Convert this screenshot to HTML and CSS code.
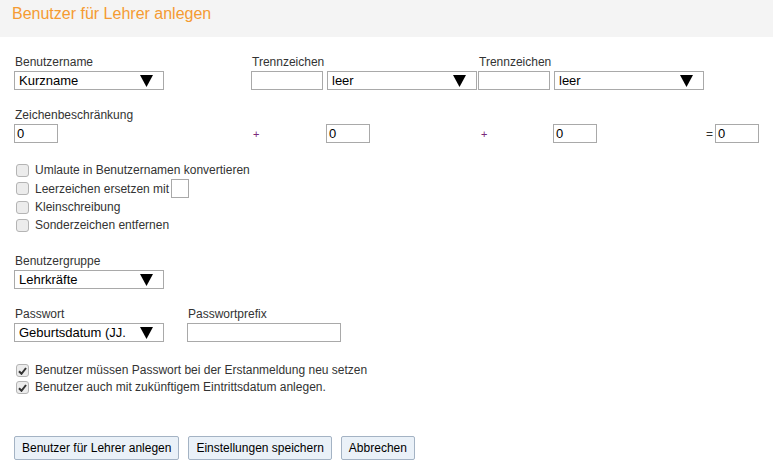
FILE: index.html
```html
<!DOCTYPE html>
<html lang="de">
<head>
    <meta charset="UTF-8">
    <title>Benutzer für Lehrer anlegen</title>
    <link rel="stylesheet" href="styles.css">
</head>
<body>
    <header class="page-head">
        <h1>Benutzer für Lehrer anlegen</h1>
    </header>

    <form class="form">
        <div class="row">
            <div class="field field-name">
                <label>Benutzername</label>
                <div class="select w150"><span>Kurzname</span><svg class="arrow" width="13" height="12" viewBox="0 0 13 12"><path d="M0 0 H13 L6.5 12 Z" fill="#000"/></svg></div>
            </div>
            <div class="field field-sep">
                <label>Trennzeichen</label>
                <div class="pair">
                    <div class="input w72"></div>
                    <div class="select w150"><span>leer</span><svg class="arrow" width="13" height="12" viewBox="0 0 13 12"><path d="M0 0 H13 L6.5 12 Z" fill="#000"/></svg></div>
                </div>
            </div>
            <div class="field">
                <label>Trennzeichen</label>
                <div class="pair">
                    <div class="input w72"></div>
                    <div class="select w150"><span>leer</span><svg class="arrow" width="13" height="12" viewBox="0 0 13 12"><path d="M0 0 H13 L6.5 12 Z" fill="#000"/></svg></div>
                </div>
            </div>
        </div>

        <div class="block">
            <label>Zeichenbeschränkung</label>
            <div class="limits">
                <div class="cell c1"><div class="input w44">0</div></div>
                <div class="cell c2"><span class="op">+</span></div>
                <div class="cell c3"><div class="input w44">0</div></div>
                <div class="cell c4"><span class="op">+</span></div>
                <div class="cell c5"><div class="input w44">0</div></div>
                <div class="cell c6"><span class="eq">=</span></div>
                <div class="cell"><div class="input w44">0</div></div>
            </div>
        </div>

        <ul class="checks">
            <li><span class="box"></span>Umlaute in Benutzernamen konvertieren</li>
            <li><span class="box"></span>Leerzeichen ersetzen mit <span class="input small"></span></li>
            <li><span class="box"></span>Kleinschreibung</li>
            <li><span class="box"></span>Sonderzeichen entfernen</li>
        </ul>

        <div class="block group">
            <label>Benutzergruppe</label>
            <div class="select w150"><span>Lehrkräfte</span><svg class="arrow" width="13" height="12" viewBox="0 0 13 12"><path d="M0 0 H13 L6.5 12 Z" fill="#000"/></svg></div>
        </div>

        <div class="row pw">
            <div class="field field-pw">
                <label>Passwort</label>
                <div class="select w150"><span>Geburtsdatum (JJ.</span><svg class="arrow" width="13" height="12" viewBox="0 0 13 12"><path d="M0 0 H13 L6.5 12 Z" fill="#000"/></svg></div>
            </div>
            <div class="field">
                <label>Passwortprefix</label>
                <div class="input w154"></div>
            </div>
        </div>

        <ul class="checks checked">
            <li><span class="box on"><svg width="9" height="8" viewBox="0 0 9 8"><path d="M1 4.2 L3.5 6.8 L8 1" fill="none" stroke="#333" stroke-width="2"/></svg></span>Benutzer müssen Passwort bei der Erstanmeldung neu setzen</li>
            <li><span class="box on"><svg width="9" height="8" viewBox="0 0 9 8"><path d="M1 4.2 L3.5 6.8 L8 1" fill="none" stroke="#333" stroke-width="2"/></svg></span>Benutzer auch mit zukünftigem Eintrittsdatum anlegen.</li>
        </ul>

        <div class="buttons">
            <button type="button" class="button">Benutzer für Lehrer anlegen</button>
            <button type="button" class="button">Einstellungen speichern</button>
            <button type="button" class="button">Abbrechen</button>
        </div>
    </form>
</body>
</html>
```

FILE: styles.css
```css
body {
    margin: 0;
    font-family: "Liberation Sans", Arial, sans-serif;
    font-size: 12px;
    color: #333;
    background-color: #fff;
}

.page-head {
    background-color: #f4f4f4;
    height: 37px;
    padding: 0 12px;
}

.page-head h1 {
    margin: 0;
    padding-top: 5px;
    font-size: 16px;
    font-weight: normal;
    color: #f59b32;
}

.form {
    padding: 18px 14px 0 14px;
}

label {
    display: block;
    line-height: 14px;
    margin-bottom: 2px;
    padding-left: 1px;
}

.row {
    display: flex;
}

.field-name {
    width: 237px;
}

.field-sep {
    width: 227px;
}

.field-pw {
    width: 173px;
}

.pair {
    display: flex;
    gap: 4px;
}

.select,
.input {
    box-sizing: border-box;
    height: 19px;
    border: 1px solid #a9a9a9;
    background-color: #fff;
    font-size: 13px;
    color: #000;
}

.select {
    display: flex;
    justify-content: space-between;
    align-items: center;
    padding: 0 10px 0 4px;
    white-space: nowrap;
}

.arrow {
    flex: none;
}

.input {
    padding: 1px 2px;
    line-height: 15px;
}

.w150 { width: 150px; }
.w72 { width: 72px; }
.w44 { width: 44px; }
.w154 { width: 154px; }

.block {
    margin-top: 18px;
}

.limits {
    display: flex;
    align-items: center;
}

.c1 { width: 239px; }
.c2 { width: 73px; }
.c3 { width: 155px; }
.c4 { width: 72px; }
.c5 { width: 153px; }
.c6 { width: 9px; }

.op {
    color: #7a2a7a;
    font-size: 11px;
}

.eq {
    color: #333;
}

.checks {
    list-style: none;
    margin: 18px 0 0 0;
    padding: 0;
}

.checks li {
    display: flex;
    align-items: center;
    min-height: 18px;
    line-height: 18px;
}

.box {
    box-sizing: border-box;
    width: 13px;
    height: 13px;
    margin: 0 6px 0 2px;
    border: 1px solid #b4b4b4;
    border-radius: 3px;
    background-color: #ececec;
    display: inline-flex;
    align-items: center;
    justify-content: center;
}

.input.small {
    display: inline-block;
    width: 18px;
    height: 19px;
    margin-left: 2px;
}

.group {
    margin-top: 20px;
}

.pw {
    margin-top: 18px;
}

.checked {
    margin-top: 20px;
}

.checked li {
    min-height: 17px;
    line-height: 17px;
}

.buttons {
    margin-top: 40px;
    display: flex;
    gap: 9px;
}

.button {
    font-family: "Liberation Sans", Arial, sans-serif;
    font-size: 12px;
    color: #000;
    background-color: #eaf1f8;
    border: 1px solid #a4b3c4;
    border-radius: 2px;
    height: 24px;
    padding: 0 7px;
}
```
